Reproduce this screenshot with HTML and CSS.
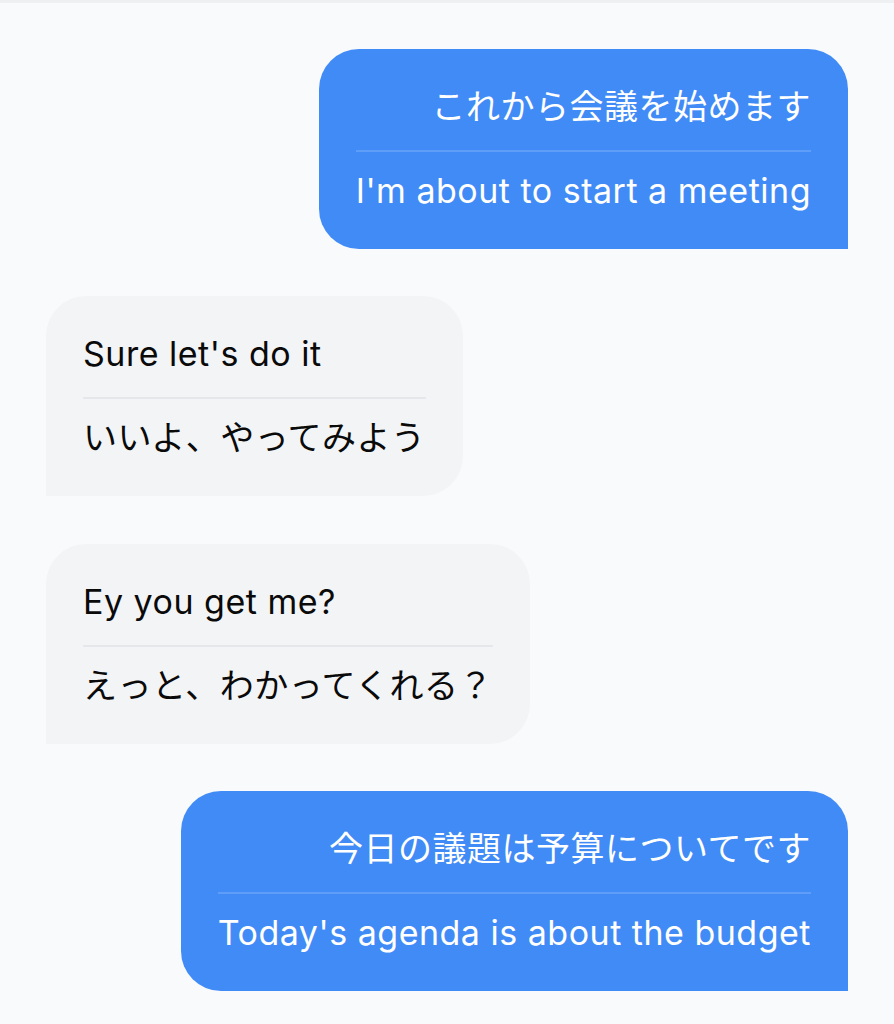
FILE: index.html
```html
<!DOCTYPE html>
<html lang="ja">
<head>
    <meta charset="UTF-8" />
    <title>Chat</title>
    <link rel="stylesheet" href="styles.css">
</head>
<body>
    <div class="chat">
        <div class="bubble me">
            <p class="line">これから会議を始めます</p>
            <p class="line">I'm about to start a meeting</p>
        </div>

        <div class="bubble them">
            <p class="line">Sure let's do it</p>
            <p class="line">いいよ、やってみよう</p>
        </div>

        <div class="bubble them">
            <p class="line">Ey you get me?</p>
            <p class="line">えっと、わかってくれる？</p>
        </div>

        <div class="bubble me">
            <p class="line">今日の議題は予算についてです</p>
            <p class="line">Today's agenda is about the budget</p>
        </div>
    </div>
</body>
</html>
```

FILE: styles.css
```css
html, body {
    margin: 0;
    padding: 0;
}

body {
    font-family: Inter, "Noto Sans CJK JP", sans-serif;
    background-color: #f9fafb;
    border-top: 3px solid #eff0f1;
    min-height: 1021px;
}

.chat {
    display: flex;
    flex-direction: column;
    gap: 47.33px;
    padding: 46px 46px 0;
}

.bubble {
    width: fit-content;
    padding: 34px 37px;
    border-radius: 40px;
    font-size: 34px;
    letter-spacing: 0.5px;
}

.me {
    align-self: flex-end;
    background-color: #418bf7;
    color: white;
    text-align: right;
    border-bottom-right-radius: 0;
}

.them {
    align-self: flex-start;
    background-color: #f3f4f6;
    color: #0a0a0a;
    border-bottom-left-radius: 0;
}

.line {
    margin: 0;
    line-height: 48px;
}

.line:first-child {
    padding-bottom: 19px;
    margin-bottom: 15px;
    border-bottom: 2px solid #e6e7ea;
}

.me .line:first-child {
    border-bottom-color: #5e9ef9;
}
```
